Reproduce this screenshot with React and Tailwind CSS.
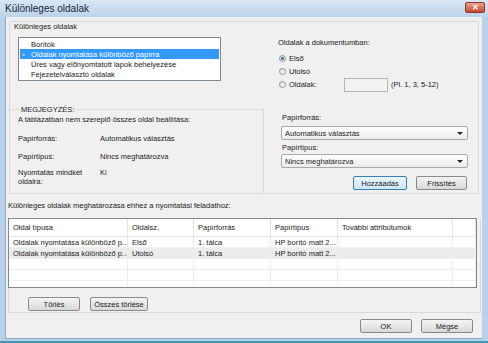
function Radio({ checked, label, children }) {
  return (
    <div className="flex items-center h-[13px]">
      <span className="w-[7px] h-[7px] rounded-full border border-[#8f8f8f] bg-gradient-to-br from-[#dcdcdc] to-white flex items-center justify-center">
        {checked && <span className="w-[3px] h-[3px] rounded-full bg-[#1f5fb8]" />}
      </span>
      <span className="ml-[3px] w-[55px]">{label}</span>
      {children}
    </div>
  );
}

function Combo({ value }) {
  return (
    <div className="w-[187px] h-[14px] border border-[#a9a9a9] rounded-[2px] bg-gradient-to-b from-white to-[#ececec] flex items-center justify-between pl-[3px] pr-[4px]">
      <span>{value}</span>
      <span className="w-0 h-0 border-l-[3px] border-r-[3px] border-t-[3px] border-l-transparent border-r-transparent border-t-[#222]" />
    </div>
  );
}

function Btn({ children, w, primary }) {
  return (
    <div
      className={`${w} h-[14px] rounded-[2px] border flex items-center justify-center ${
        primary
          ? "border-[#3c7fb1] bg-gradient-to-b from-[#eaf6fd] to-[#cde8f9]"
          : "border-[#8a8a8a] bg-gradient-to-b from-[#f4f4f4] to-[#d9d9d9]"
      }`}
    >
      {children}
    </div>
  );
}

const cols = ["w-[119px]", "w-[66px]", "w-[77px]", "w-[67px]", "w-[115px]", "flex-1"];
const rows = [
  ["Oldalak nyomtatása különböző p...", "Első", "1. tálca", "HP borító matt 2...", "", ""],
  ["Oldalak nyomtatása különböző p...", "Utolsó", "1. tálca", "HP borító matt 2...", "", ""],
  ["", "", "", "", "", ""],
  ["", "", "", "", "", ""],
  ["", "", "", "", "", ""],
];

export default function App() {
  return (
    <div className="w-[488px] h-[343px] overflow-hidden flex flex-col bg-[#b9d1ea] border-b-[2px] border-[#3f97b8] font-['Liberation_Sans',Arial,sans-serif] text-[7.5px] leading-[9px] text-[#1b1b1b]">
      <div className="h-[17px] shrink-0 flex items-center justify-between pl-[5px] pr-[3px] bg-gradient-to-b from-[#d9e7f6] to-[#bcd3ea]">
        <span className="text-[10px] text-[#152536]">Különleges oldalak</span>
        <div className="w-[20px] h-[11px] mt-[-2px] rounded-[2px] border border-[#8a3a2c] bg-gradient-to-b from-[#e9a48f] to-[#c7432b] flex items-center justify-center text-white text-[8px] font-bold">
          ✕
        </div>
      </div>

      <div className="flex-1 ml-[5px] mr-[6px] mb-[2px] bg-[#f0f0f0] border-l border-b border-[#8ea8c3] flex flex-col">
        <div className="mt-[4px] ml-[3px] w-[470px] h-[173px] border border-[#dadada] rounded-[2px] flex flex-col">
          <div className="ml-[4px] h-[9px]">Különleges oldalak</div>
          <div className="flex flex-1">
            <div className="w-[254px] flex flex-col">
              <div className="mt-[6px] ml-[8px] w-[203px] h-[44px] bg-white border border-[#828790] flex flex-col pt-[1px]">
                <div className="h-[10px] pl-[12px] flex items-center">Borítók</div>
                <div className="h-[10px] mx-[1px] pl-[2px] flex items-center bg-[#3399ff] text-white">
                  <span className="w-[9px] text-[5px]">»</span>Oldalak nyomtatása különböző papírra
                </div>
                <div className="h-[10px] pl-[12px] flex items-center">Üres vagy előnyomtatott lapok behelyezése</div>
                <div className="h-[10px] pl-[12px] flex items-center">Fejezetelválasztó oldalak</div>
              </div>
              <fieldset className="mt-[24px] flex-1 border-t border-r border-[#dadada]">
                <legend className="ml-[10px] px-[1px]">MEGJEGYZÉS:</legend>
                <div className="mt-[1px] ml-[8px]">A táblázatban nem szereplő összes oldal beállítása:</div>
                <div className="mt-[10px] ml-[8px] flex">
                  <span className="w-[82px]">Papírforrás:</span>
                  <span>Automatikus választás</span>
                </div>
                <div className="mt-[9px] ml-[8px] flex">
                  <span className="w-[82px]">Papírtípus:</span>
                  <span>Nincs meghatározva</span>
                </div>
                <div className="mt-[7px] ml-[8px] flex">
                  <span className="w-[82px]">
                    Nyomtatás mindkét
                    <br />
                    oldalra:
                  </span>
                  <span>Ki</span>
                </div>
              </fieldset>
            </div>

            <div className="flex-1 flex flex-col">
              <div className="mt-[7px] ml-[14px]">Oldalak a dokumentumban:</div>
              <div className="mt-[5px] ml-[15px] flex flex-col">
                <Radio checked label="Első" />
                <Radio label="Utolsó" />
                <Radio label="Oldalak:">
                  <div className="w-[44px] h-[14px] border border-[#b5b5b5] bg-[#f2f2f2]" />
                  <span className="ml-[3px]">(Pl. 1, 3, 5-12)</span>
                </Radio>
              </div>
              <div className="mt-[22px] ml-[18px]">Papírforrás:</div>
              <div className="mt-[4px] ml-[17px]">
                <Combo value="Automatikus választás" />
              </div>
              <div className="mt-[3px] ml-[18px]">Papírtípus:</div>
              <div className="mt-[2px] ml-[17px]">
                <Combo value="Nincs meghatározva" />
              </div>
              <div className="mt-[8px] ml-[89px] flex gap-[9px]">
                <Btn w="w-[54px]" primary>Hozzáadás</Btn>
                <Btn w="w-[51px]">Frissítés</Btn>
              </div>
            </div>
          </div>
        </div>

        <div className="mt-[7px] ml-[2px]">Különleges oldalak meghatározása ehhez a nyomtatási feladathoz:</div>
        <div className="mt-[8px] ml-[2px] w-[473px] h-[95px] border-l border-r border-b border-[#dadada] flex flex-col">
          <div className="-ml-[1px] w-[469px] h-[70px] bg-white border border-[#828790] overflow-hidden flex flex-col">
            <div className="h-[18px] shrink-0 flex border-b border-[#e3e3e3]">
              {["Oldal típusa", "Oldalsz.", "Papírforrás", "Papírtípus", "További attribútumok", ""].map((h, i) => (
                <div key={i} className={`${cols[i]} border-r border-[#e3e3e3] pl-[4px] flex items-center`}>
                  {h}
                </div>
              ))}
            </div>
            {rows.map((r, ri) => (
              <div key={ri} className={`h-[11px] shrink-0 flex border-b border-[#f0f0f0] ${ri === 1 ? "bg-[#ececec]" : ""}`}>
                {r.map((c, i) => (
                  <div key={i} className={`${cols[i]} border-r border-[#ececec] pl-[4px] flex items-center whitespace-nowrap overflow-hidden`}>
                    {c}
                  </div>
                ))}
              </div>
            ))}
          </div>
          <div className="mt-[9px] ml-[19px] flex gap-[10px]">
            <Btn w="w-[52px]">Törlés</Btn>
            <Btn w="w-[58px]">Összes törlése</Btn>
          </div>
        </div>

        <div className="mt-[6px] ml-[354px] flex gap-[9px]">
          <Btn w="w-[52px]">OK</Btn>
          <Btn w="w-[52px]">Mégse</Btn>
        </div>
      </div>
    </div>
  );
}
